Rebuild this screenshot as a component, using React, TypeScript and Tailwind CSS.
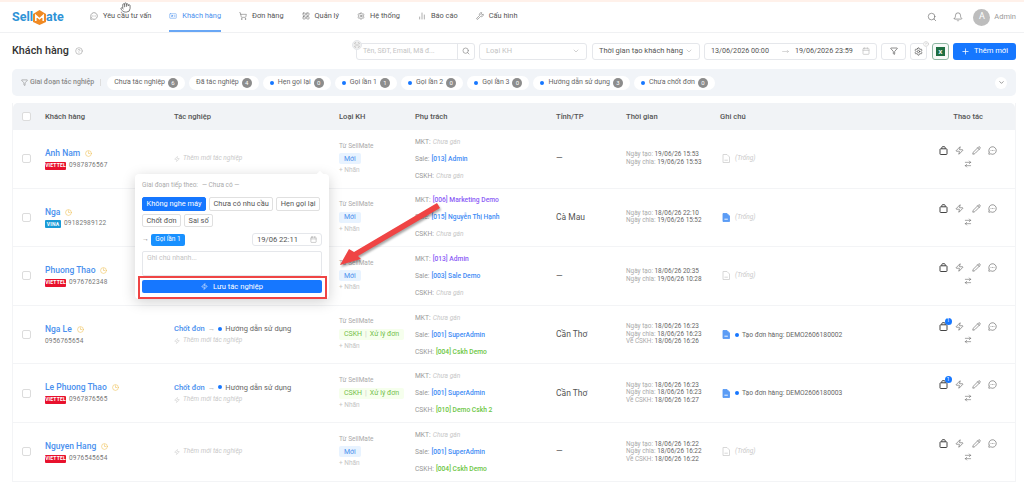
import {
  ArrowRightLeft, Bell, Calendar, ChevronDown, CircleHelp, Clock3, Filter, Hand,
  MessageCircleMore, MoveRight, Pencil, Plus, Search, Settings, ShoppingCart, LayoutGrid,
  ChartNoAxesColumn, Wrench, Zap, IdCard, ScanLine,
} from 'lucide-react'

const navItems = [
  { label: 'Yêu cầu tư vấn', icon: MessageCircleMore },
  { label: 'Khách hàng', icon: IdCard, active: true },
  { label: 'Đơn hàng', icon: ShoppingCart },
  { label: 'Quản lý', icon: LayoutGrid },
  { label: 'Hệ thống', icon: Settings },
  { label: 'Báo cáo', icon: ChartNoAxesColumn },
  { label: 'Cấu hình', icon: Wrench },
]

const stages = [
  { label: 'Chưa tác nghiệp', count: 6 },
  { label: 'Đã tác nghiệp', count: 4 },
  { label: 'Hẹn gọi lại', count: 0, dot: true },
  { label: 'Gọi lần 1', count: 1, dot: true },
  { label: 'Gọi lần 2', count: 0, dot: true },
  { label: 'Gọi lần 3', count: 0, dot: true },
  { label: 'Hướng dẫn sử dụng', count: 3, dot: true },
  { label: 'Chưa chốt đơn', count: 0, dot: true },
]

type Person = { text: string; color: string } | null

type Row = {
  name: string
  phone: string
  carrier?: 'VIETTEL' | 'VINA'
  stage?: boolean
  cskh?: boolean
  mkt: Person
  sale: Person
  care: Person
  city: string
  times: string[]
  note?: string
  noteActive?: boolean
  badge?: boolean
}

const purple = 'text-[#8b5cf6]'
const blue = 'text-[#3f8cf5]'
const green = 'text-[#6cc644]'

const rows: Row[] = [
  {
    name: 'Anh Nam', phone: '0987876567', carrier: 'VIETTEL',
    mkt: null, sale: { text: '[013] Admin', color: blue }, care: null, city: '—',
    times: ['Ngày tạo: |19/06/26 15:53', 'Ngày chia: |19/06/26 15:53'],
  },
  {
    name: 'Nga', phone: '09182989122', carrier: 'VINA',
    mkt: { text: '[006] Marketing Demo', color: purple }, sale: { text: '[015] Nguyễn Thị Hạnh', color: blue }, care: null, city: 'Cà Mau',
    times: ['Ngày tạo: |18/06/26 22:10', 'Ngày chia: |19/06/26 15:52'], noteActive: true,
  },
  {
    name: 'Phuong Thao', phone: '0976762348', carrier: 'VIETTEL',
    mkt: { text: '[013] Admin', color: purple }, sale: { text: '[003] Sale Demo', color: blue }, care: null, city: '—',
    times: ['Ngày tạo: |18/06/26 20:35', 'Ngày chia: |19/06/26 10:28'],
  },
  {
    name: 'Nga Le', phone: '0956765654', stage: true, cskh: true,
    mkt: null, sale: { text: '[001] SuperAdmin', color: blue }, care: { text: '[004] Cskh Demo', color: green }, city: 'Cần Thơ',
    times: ['Ngày tạo: |18/06/26 16:23', 'Ngày chia: |18/06/26 16:23', 'Về CSKH: |18/06/26 16:26'],
    note: 'Tạo đơn hàng: DEMO2606180002', noteActive: true, badge: true,
  },
  {
    name: 'Le Phuong Thao', phone: '0967876565', carrier: 'VIETTEL', stage: true, cskh: true,
    mkt: null, sale: { text: '[001] SuperAdmin', color: blue }, care: { text: '[010] Demo Cskh 2', color: green }, city: 'Cần Thơ',
    times: ['Ngày tạo: |18/06/26 16:23', 'Ngày chia: |18/06/26 16:23', 'Về CSKH: |18/06/26 16:27'],
    note: 'Tạo đơn hàng: DEMO2606180003', noteActive: true, badge: true,
  },
  {
    name: 'Nguyen Hang', phone: '0976545654', carrier: 'VIETTEL',
    mkt: null, sale: { text: '[001] SuperAdmin', color: blue }, care: { text: '[004] Cskh Demo', color: green }, city: '—',
    times: ['Ngày tạo: |18/06/26 16:22', 'Ngày chia: |18/06/26 16:22', 'Về CSKH: |18/06/26 16:22'],
  },
]

const gridCols = 'grid grid-cols-[32px_129px_165px_76px_141px_70px_94px_1fr]'

function Logo() {
  return (
    <div className="flex items-center w-[78px] text-[12.5px] font-bold text-[#2f93d6]">
      <span>Sell</span>
      <svg width="13" height="15" viewBox="0 0 13 15" className="shrink-0">
        <path d="M0 4 6.5 0 13 4v8l-6.5 3L0 12z" fill="#f08a24" />
        <path d="M2.8 11V5.4l3.7 3.4 3.7-3.4V11" fill="none" stroke="#fff" strokeWidth="1.5" />
      </svg>
      <span>ate</span>
    </div>
  )
}

function Header() {
  return (
    <header className="h-[31px] flex items-stretch justify-between pl-3 pr-2 bg-white border-b border-[#f0f1f3]">
      <div className="flex items-stretch">
        <Logo />
        <nav className="flex gap-[18px]">
          {navItems.map((item) => (
            <div
              key={item.label}
              className={`flex items-center gap-[5px] text-[7.4px] border-b-2 ${
                item.active ? 'border-[#69a7f5] text-[#4a90ee]' : 'border-transparent text-[#555]'
              }`}
            >
              <item.icon size={8} strokeWidth={1.4} />
              <span>{item.label}</span>
            </div>
          ))}
        </nav>
      </div>
      <div className="flex items-center text-[#666]">
        <Search size={10} strokeWidth={1.5} />
        <Bell size={10} strokeWidth={1.5} className="ml-[16px]" />
        <div className="ml-[10px] w-[17px] h-[17px] rounded-full bg-[#bdbdbd] text-white text-[9px] flex items-center justify-center">
          A
        </div>
        <span className="ml-[4px] text-[7.5px] text-[#999]">Admin</span>
      </div>
    </header>
  )
}

function SelectBox({ width, label, muted }: { width: string; label: string; muted?: boolean }) {
  return (
    <div className={`${width} h-[17px] flex items-center justify-between px-[6px] rounded-[3px] border border-[#e5e7eb] bg-white text-[7.5px] whitespace-nowrap ${muted ? 'text-[#c4c4c4]' : 'text-[#555]'}`}>
      <span>{label}</span>
      <ChevronDown size={8} className="text-[#bbb]" />
    </div>
  )
}

function Toolbar() {
  return (
    <div className="h-[36px] flex items-center justify-between pl-3 pr-2">
      <div className="flex items-center gap-[6px]">
        <h1 className="text-[10.8px] font-medium text-[#333]">Khách hàng</h1>
        <CircleHelp size={8} className="text-[#aaa]" />
      </div>
      <div className="flex items-center">
        <div className="relative w-[119px] h-[17px] flex items-center rounded-[3px] border border-[#e5e7eb] bg-white text-[7px] text-[#c4c4c4]">
          <span className="flex-1 pl-[6px]">Tên, SĐT, Email, Mã đ...</span>
          <span className="w-[17px] h-full flex items-center justify-center border-l border-[#e5e7eb] text-[#888]">
            <Search size={8} />
          </span>
          <span className="absolute -left-[5px] -top-[4px] w-[10px] h-[10px] rounded-full bg-[#f0f0f0] border border-[#e5e7eb] flex items-center justify-center text-[#999]">
            <ScanLine size={6} />
          </span>
        </div>
        <div className="ml-[4px]"><SelectBox width="w-[108px]" label="Loại KH" muted /></div>
        <div className="ml-[5px]"><SelectBox width="w-[108px]" label="Thời gian tạo khách hàng" /></div>
        <div className="ml-[4px] w-[173px] h-[17px] flex items-center px-[6px] rounded-[3px] border border-[#e5e7eb] bg-white text-[7.2px] text-[#555]">
          <span>13/06/2026 00:00</span>
          <MoveRight size={7} className="ml-[13px] text-[#bbb]" />
          <span className="ml-[6px]">19/06/2026 23:59</span>
          <Calendar size={8} className="ml-auto text-[#bbb]" />
        </div>
        <div className="ml-[4px] w-[25px] h-[17px] flex items-center justify-center rounded-[3px] border border-[#e5e7eb] bg-white text-[#555]">
          <Filter size={8} />
        </div>
        <div className="relative ml-[4px] w-[17px] h-[17px] flex items-center justify-center rounded-[3px] border border-[#e5e7eb] bg-white text-[#555]">
          <Settings size={9} />
          <CircleHelp size={6} className="absolute -right-[3px] -top-[3px] text-[#bbb] bg-white rounded-full" />
        </div>
        <div className="ml-[5px] w-[17px] h-[17px] flex items-center justify-center rounded-[3px] border border-[#8fb8a4] bg-[#f6faf8]">
          <span className="w-[9px] h-[9px] bg-[#1d6f42] text-white text-[6px] font-bold flex items-center justify-center">X</span>
        </div>
        <div className="ml-[4px] w-[63px] h-[17px] flex items-center justify-center gap-[4px] rounded-[3px] bg-[#1677ff] text-white text-[7.6px]">
          <Plus size={9} />
          <span>Thêm mới</span>
        </div>
      </div>
    </div>
  )
}

function StageBar() {
  return (
    <div className="ml-3 mr-2 h-[27px] flex items-center justify-between pl-[9px] pr-[9px] rounded-[5px] bg-[#f1f4f8]">
      <div className="flex items-center">
        <Filter size={7} className="text-[#888] mr-[2px]" />
        <span className="text-[7px] font-medium text-[#8a8a8a]">Giai đoạn tác nghiệp</span>
        <span className="mx-[6px] w-px h-[7px] bg-[#ddd]" />
        <div className="flex items-center gap-[4px]">
          {stages.map((stage) => (
            <div key={stage.label} className="h-[14px] flex items-center rounded-full bg-white px-[7px] gap-[3px] text-[7px] text-[#666]">
              {stage.dot && <span className="w-[4px] h-[4px] rounded-full bg-[#1677ff] mr-[1px]" />}
              <span>{stage.label}</span>
              <span className="w-[10px] h-[10px] rounded-full bg-[#8c8c8c] text-white text-[6px] flex items-center justify-center">
                {stage.count}
              </span>
            </div>
          ))}
        </div>
      </div>
      <div className="w-[12px] h-[12px] rounded-full bg-white flex items-center justify-center text-[#555]">
        <ChevronDown size={7} />
      </div>
    </div>
  )
}

function Checkbox() {
  return <span className="w-[9px] h-[9px] rounded-[2px] border border-[#dcdcdc] bg-white" />
}

function CarrierTag({ carrier }: { carrier: 'VIETTEL' | 'VINA' }) {
  return (
    <span className={`h-[8px] mr-[3px] rounded-[1px] text-white text-[5px] font-bold flex items-center justify-center ${carrier === 'VINA' ? 'w-[16px] bg-[#1a9ad6]' : 'w-[21px] bg-[#e8112d]'}`}>
      {carrier}
    </span>
  )
}

function PersonLine({ label, person }: { label: string; person: Person }) {
  return (
    <div className="h-[17px] flex items-center gap-[2px] text-[6.7px] text-[#9a9a9a]">
      <span>{label}:</span>
      {person ? (
        <span className={`font-medium ${person.color}`}>{person.text}</span>
      ) : (
        <span className="italic text-[#c8c8c8]">Chưa gán</span>
      )}
    </div>
  )
}

function AddWork() {
  return (
    <div className="flex items-center gap-[3px] text-[6.5px] italic text-[#c9c9c9]">
      <Zap size={6} />
      <span>Thêm mới tác nghiệp</span>
    </div>
  )
}

function NoteIcon({ active }: { active?: boolean }) {
  return (
    <svg width="8" height="9" viewBox="0 0 8 9" className="shrink-0">
      <path
        d="M1 .5h4l2.5 2.5v5.5H1z"
        fill={active ? '#5b9cf5' : 'none'}
        stroke={active ? '#5b9cf5' : '#d4d4d4'}
        strokeWidth="0.9"
      />
      <path d="M2.4 6.2h3.4" stroke={active ? '#fff' : '#d4d4d4'} strokeWidth="0.9" />
    </svg>
  )
}

function BagIcon() {
  return (
    <svg width="9" height="9" viewBox="0 0 9 9" fill="none" stroke="#444" strokeWidth="1">
      <rect x="1" y="2.8" width="7" height="5.7" rx="0.6" />
      <path d="M2.8 2.8V1.6a.9.9 0 0 1 .9-.9h1.6a.9.9 0 0 1 .9.9v1.2" />
    </svg>
  )
}

function CustomerRow({ row }: { row: Row }) {
  return (
    <div className={`${gridCols} h-[58.6px] items-center border-b border-[#f3f4f6] bg-white`}>
      <div className="pl-[9px] flex items-center"><Checkbox /></div>

      <div className="flex flex-col gap-[1px]">
        <div className="flex items-center gap-[5px] text-[8.5px] font-medium text-[#4a90ee]">
          <span>{row.name}</span>
          <Clock3 size={7} className="text-[#efc25a]" />
        </div>
        <div className="flex items-center text-[6.5px] tracking-[0.2px] text-[#777]">
          {row.carrier && <CarrierTag carrier={row.carrier} />}
          <span>{row.phone}</span>
        </div>
      </div>

      <div className="flex flex-col gap-[2px]">
        {row.stage && (
          <div className="flex items-center gap-[3px] text-[7.5px] text-[#666]">
            <span className="font-medium text-[#4a90ee]">Chốt đơn</span>
            <span className="text-[#bbb]">→</span>
            <span className="w-[4px] h-[4px] rounded-full bg-[#1677ff]" />
            <span>Hướng dẫn sử dụng</span>
          </div>
        )}
        <AddWork />
      </div>

      <div className="flex flex-col items-start">
        <span className="text-[6.5px] text-[#aaa]">Từ SellMate</span>
        <span className="my-[2px]">
          {row.cskh ? (
            <span className="h-[11px] px-[5px] flex items-center gap-[3px] rounded-[2px] bg-[#f6ffed] text-[7px] text-[#73c04a]">
              <span>CSKH</span>
              <span className="text-[#ccc]">|</span>
              <span>Xử lý đơn</span>
            </span>
          ) : (
            <span className="h-[11px] px-[5px] flex items-center rounded-[2px] bg-[#e8f3ff] text-[7px] text-[#4a90ee]">Mới</span>
          )}
        </span>
        <span className="text-[6.5px] text-[#c4c4c4]">+ Nhãn</span>
      </div>

      <div className="flex flex-col">
        <PersonLine label="MKT" person={row.mkt} />
        <PersonLine label="Sale" person={row.sale} />
        <PersonLine label="CSKH" person={row.care} />
      </div>

      <div className="text-[8.5px] text-[#555]">{row.city}</div>

      <div className="flex flex-col text-[6.4px] leading-[7.5px] text-[#aaa]">
        {row.times.map((time) => {
          const [label, value] = time.split('|')
          return (
            <div key={label}>
              {label}
              <span className="text-[#666]">{value}</span>
            </div>
          )
        })}
      </div>

      <div className="flex items-center">
        <div className="flex items-center gap-[5px] w-[216px] pl-[2px]">
          <NoteIcon active={row.noteActive} />
          {row.note ? (
            <div className="flex items-center gap-[3px] text-[6.7px] text-[#666]">
              <span className="w-[4px] h-[4px] rounded-full bg-[#1677ff]" />
              <span>{row.note}</span>
            </div>
          ) : (
            <span className="text-[6.5px] italic text-[#c9c9c9]">(Trống)</span>
          )}
        </div>
        <div className="w-[64px] flex flex-col items-center gap-[5px] -translate-y-[2px] text-[#444]">
          <div className="flex items-center gap-[7.5px]">
            <span className="relative flex">
              <BagIcon />
              {row.badge && (
                <span className="absolute -right-[4px] -top-[4px] w-[7px] h-[7px] rounded-full bg-[#1677ff] text-white text-[5px] flex items-center justify-center">1</span>
              )}
            </span>
            <Zap size={9} strokeWidth={1.4} />
            <Pencil size={9} strokeWidth={1.4} />
            <MessageCircleMore size={9} strokeWidth={1.4} />
          </div>
          <ArrowRightLeft size={8} strokeWidth={1.4} />
        </div>
      </div>
    </div>
  )
}

function Table() {
  return (
    <div className="ml-3 mr-2 mt-[7px] border-x border-[#f3f4f6]">
      <div className={`${gridCols} h-[27px] items-center rounded-t-[5px] bg-[#f1f3f6] text-[7.6px] font-medium text-[#555]`}>
        <div className="pl-[9px] flex items-center"><Checkbox /></div>
        <div>Khách hàng</div>
        <div>Tác nghiệp</div>
        <div>Loại KH</div>
        <div>Phụ trách</div>
        <div>Tỉnh/TP</div>
        <div>Thời gian</div>
        <div className="flex justify-between pr-[32px]">
          <span>Ghi chú</span>
          <span>Thao tác</span>
        </div>
      </div>
      {rows.map((row) => (
        <CustomerRow key={row.name} row={row} />
      ))}
    </div>
  )
}

function Popover() {
  const options = ['Không nghe máy', 'Chưa có nhu cầu', 'Hẹn gọi lại', 'Chốt đơn', 'Sai số']
  return (
    <div className="absolute left-[135px] top-[174px] w-[194px] h-[125px] rounded-[4px] bg-white px-[7px] pt-[7px] shadow-[0_3px_14px_rgba(0,0,0,0.18)]">
      <span className="absolute right-[6px] -top-[2px] w-[6px] h-[6px] rotate-45 bg-white" />
      <div className="h-[10px] flex items-center gap-[4px] text-[6.5px] text-[#aaa]">
        <span>Giai đoạn tiếp theo:</span>
        <span>— Chưa có —</span>
      </div>
      <div className="mt-[6px] flex flex-wrap gap-x-[3px] gap-y-[3px]">
        {options.map((option, i) => (
          <span
            key={option}
            className={`h-[13.5px] px-[3.5px] flex items-center rounded-[2px] text-[7.4px] border ${
              i === 0 ? 'bg-[#1677ff] border-[#1677ff] text-white' : 'bg-white border-[#e0e0e0] text-[#555]'
            }`}
          >
            {option}
          </span>
        ))}
      </div>
      <div className="mt-[6px] h-[13px] flex items-center justify-between">
        <div className="flex items-center gap-[2px]">
          <span className="text-[7px] text-[#888]">→</span>
          <span className="h-[12px] w-[34px] flex items-center justify-center rounded-[2px] bg-[#1890ff] text-white text-[6.5px]">Gọi lần 1</span>
        </div>
        <div className="w-[70px] h-[13px] flex items-center justify-between px-[4px] rounded-[3px] border border-[#e5e7eb] text-[7.6px] text-[#555]">
          <span>19/06 22:11</span>
          <Calendar size={7} className="text-[#aaa]" />
        </div>
      </div>
      <div className="mt-[5px] h-[25px] px-[4px] pt-[1px] rounded-[2px] border border-[#e5e7eb] text-[7px] text-[#c4c4c4]">
        Ghi chú nhanh...
      </div>
      <div className="mt-[4px] h-[13px] flex items-center justify-center gap-[5px] rounded-[2px] bg-[#1677ff] text-white text-[7.6px]">
        <Zap size={7} />
        <span>Lưu tác nghiệp</span>
      </div>
    </div>
  )
}

export default function App() {
  return (
    <div className="relative w-[1024px] h-[485px] overflow-hidden bg-white font-['Roboto',sans-serif]">
      <div className="h-[2px] bg-[#fff1ea]" />
      <Header />
      <Toolbar />
      <StageBar />
      <Table />
      <Popover />

      {/* annotations on top of the screenshot */}
      <div className="absolute left-[138px] top-[276px] w-[189px] h-[23px] border-2 border-[#ef4444]" />
      <svg className="absolute inset-0 pointer-events-none" width="1024" height="485">
        <polygon
          points="340,265 349,249 354,252 437,203 440,208 358,256 361,259"
          fill="#ef4444"
          style={{ filter: 'drop-shadow(1px 2px 1px rgba(0,0,0,0.35))' }}
        />
      </svg>
      <Hand size={11} strokeWidth={1.5} className="absolute left-[120px] top-[2px] text-[#444] fill-white" />
    </div>
  )
}
